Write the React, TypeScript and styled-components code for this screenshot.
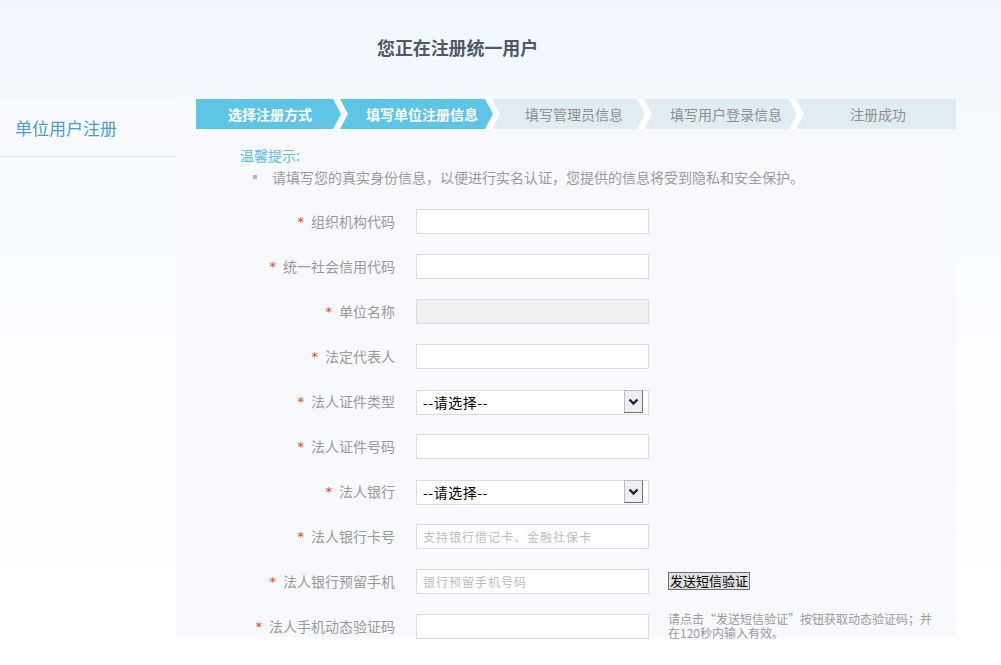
import React from "react";
import styled, { createGlobalStyle } from "styled-components";

const GlobalStyle = createGlobalStyle`
  html, body { margin: 0; padding: 0; }
  body {
    font-family: "Noto Sans CJK SC", "Noto Sans", sans-serif;
    background: linear-gradient(180deg, #f1f6fd 0px, #f6fafe 140px, #fcfdff 420px, #ffffff 640px);
    min-height: 665px;
  }
  #root { min-height: 665px; }
`;

const Page = styled.div`
  width: 1001px;
  height: 665px;
  overflow: hidden;
`;

const Header = styled.header`
  height: 99px;
  display: flex;
  align-items: center;
  padding-left: 377px;
  box-sizing: border-box;
`;

const Title = styled.h1`
  margin: 0;
  margin-top: -5px;
  font-size: 18px;
  font-weight: 700;
  color: #4f5966;
  letter-spacing: -0.1px;
`;

const Body = styled.div`
  display: flex;
  align-items: flex-start;
`;

const Sidebar = styled.aside`
  width: 176px;
  flex: none;
`;

const SideItem = styled.div`
  height: 57px;
  display: flex;
  align-items: center;
  padding-left: 15px;
  font-size: 17px;
  color: #4c9bd6;
  border-bottom: 1px solid #e6e9ef;
  background: #f9fafe;
`;

const Panel = styled.main`
  width: 780px;
  height: 538px;
  background: #f8f9fd;
  padding-left: 20px;
  box-sizing: border-box;
`;

const Steps = styled.ol`
  display: flex;
  margin: 0;
  padding: 0;
  list-style: none;
  height: 30px;
`;

const Step = styled.li<{ $active: boolean }>`
  position: relative;
  width: 152px;
  height: 30px;
  display: flex;
  align-items: center;
  justify-content: center;
  padding-right: 4px;
  box-sizing: border-box;
  background: ${(p) => (p.$active ? "#5fc5e7" : "#e1ecf2")};
  color: ${(p) => (p.$active ? "#ffffff" : "#8f8f8f")};
  font-size: 14px;
  font-weight: ${(p) => (p.$active ? 700 : 400)};
`;

const StepLabel = styled.span`
  position: relative;
  z-index: 1;
`;

const Chevron = styled.svg`
  position: absolute;
  right: 0;
  top: 0;
  width: 15px;
  height: 30px;
  display: block;
`;

const Content = styled.div`
  padding-left: 44px;
`;

const Hint = styled.div`
  margin-top: 17px;
  font-size: 14px;
  line-height: 18px;
  color: #5cc0e0;
`;

const HintList = styled.ul`
  margin: 4px 0 0;
  padding: 0;
  list-style: none;
`;

const HintItem = styled.li`
  display: flex;
  align-items: center;
  font-size: 14px;
  line-height: 18px;
  color: #9a9a9a;
`;

const Bullet = styled.span`
  width: 4px;
  height: 4px;
  background: #b5b5b5;
  margin-left: 13px;
  margin-right: 15px;
`;

const Form = styled.form`
  margin-left: -64px;
  margin-top: 23px;
  display: flex;
  flex-direction: column;
  gap: 20px;
`;

const Row = styled.div`
  display: flex;
  align-items: center;
  height: 25px;
`;

const Label = styled.label`
  width: 219px;
  display: flex;
  justify-content: flex-end;
  align-items: center;
  font-size: 14px;
  line-height: 18px;
  color: #9a9a9a;
  white-space: nowrap;
  flex: none;
  position: relative;
  top: -1px;
`;

const Star = styled.span`
  color: #ff3a1e;
  font-size: 13px;
  line-height: 10px;
  height: 7px;
  margin-right: 7px;
  font-family: "DejaVu Sans", sans-serif;
  font-weight: 400;
`;

const Field = styled.input<{ $disabled?: boolean }>`
  margin-left: 21px;
  width: 233px;
  height: 25px;
  box-sizing: border-box;
  border: 1px solid #dcdcdc;
  background: ${(p) => (p.$disabled ? "#f0f0f0" : "#ffffff")};
  padding: 0 6px;
  font-family: "Noto Sans CJK SC", sans-serif;
  font-size: 12px;
  letter-spacing: 1px;
  color: #333;
  outline: none;
  flex: none;
  &::placeholder { color: #bdbdbd; }
`;

const SelectWrap = styled.div`
  position: relative;
  margin-left: 21px;
  width: 233px;
  height: 25px;
  flex: none;
`;

const Select = styled.select`
  appearance: none;
  -webkit-appearance: none;
  width: 100%;
  height: 25px;
  box-sizing: border-box;
  border: 1px solid #dcdcdc;
  background: #fff;
  padding: 0 6px;
  font-family: "Noto Sans CJK SC", sans-serif;
  font-size: 14px;
  letter-spacing: 0.5px;
  color: #000;
  outline: none;
  border-radius: 0;
`;

const ArrowBox = styled.span`
  position: absolute;
  top: 1px;
  right: 6px;
  width: 19px;
  height: 23px;
  box-sizing: border-box;
  background: #efefef;
  border-top: 1px solid #bcbcbc;
  border-left: 1px solid #bcbcbc;
  border-right: 1px solid #6f6f6f;
  border-bottom: 1px solid #6f6f6f;
  display: flex;
  align-items: center;
  justify-content: center;
  pointer-events: none;
`;

const SmsButton = styled.button`
  margin-left: 19px;
  height: 18px;
  padding: 0 1px;
  font-family: "Noto Sans CJK SC", sans-serif;
  font-size: 13px;
  line-height: 16px;
  color: #000;
  background: #e1e1e1;
  border: 1px solid #707070;
  border-radius: 0;
  margin-top: -1px;
`;

const Help = styled.p`
  margin: 0 0 0 19px;
  align-self: flex-start;
  width: 270px;
  font-size: 12px;
  line-height: 14px;
  color: #9a9a9a;
  margin-top: -2px;
`;

const steps = ["选择注册方式", "填写单位注册信息", "填写管理员信息", "填写用户登录信息", "注册成功"];
const ACTIVE = "#5fc5e7";
const IDLE = "#e1ecf2";

type FieldDef =
  | { label: string; kind: "input"; placeholder?: string; disabled?: boolean; extra?: "sms" | "help" }
  | { label: string; kind: "select" };

const fields: FieldDef[] = [
  { label: "组织机构代码", kind: "input" },
  { label: "统一社会信用代码", kind: "input" },
  { label: "单位名称", kind: "input", disabled: true },
  { label: "法定代表人", kind: "input" },
  { label: "法人证件类型", kind: "select" },
  { label: "法人证件号码", kind: "input" },
  { label: "法人银行", kind: "select" },
  { label: "法人银行卡号", kind: "input", placeholder: "支持银行借记卡、金融社保卡" },
  { label: "法人银行预留手机", kind: "input", placeholder: "银行预留手机号码", extra: "sms" },
  { label: "法人手机动态验证码", kind: "input", extra: "help" },
];

export default function App() {
  return (
    <Page>
      <GlobalStyle />
      <Header>
        <Title>您正在注册统一用户</Title>
      </Header>
      <Body>
        <Sidebar>
          <SideItem>单位用户注册</SideItem>
        </Sidebar>
        <Panel>
          <Steps>
            {steps.map((s, i) => {
              const active = i < 2;
              const last = i === steps.length - 1;
              const next = i + 1 < 2 ? ACTIVE : IDLE;
              const cur = active ? ACTIVE : IDLE;
              return (
                <Step key={s} $active={active}>
                  <StepLabel>{s}</StepLabel>
                  {!last && (
                    <Chevron viewBox="0 0 15 30">
                      <rect x="0" y="0" width="15" height="30" fill={next} />
                      <polygon points="0,0 7,0 15,15 7,30 0,30" fill="#ffffff" />
                      <polygon points="0,0 8,15 0,30" fill={cur} />
                    </Chevron>
                  )}
                </Step>
              );
            })}
          </Steps>
          <Content>
            <Hint>温馨提示:</Hint>
            <HintList>
              <HintItem>
                <Bullet />
                请填写您的真实身份信息，以便进行实名认证，您提供的信息将受到隐私和安全保护。
              </HintItem>
            </HintList>
            <Form onSubmit={(e) => e.preventDefault()}>
              {fields.map((f) => (
                <Row key={f.label}>
                  <Label>
                    <Star>*</Star>
                    {f.label}
                  </Label>
                  {f.kind === "select" ? (
                    <SelectWrap>
                      <Select defaultValue="">
                        <option value="">--请选择--</option>
                      </Select>
                      <ArrowBox>
                        <svg width="11" height="8" viewBox="0 0 11 8">
                          <polyline points="1.5,1.5 5.5,5.5 9.5,1.5" fill="none" stroke="#1a2340" strokeWidth="2.4" />
                        </svg>
                      </ArrowBox>
                    </SelectWrap>
                  ) : (
                    <Field
                      type="text"
                      placeholder={f.placeholder}
                      $disabled={f.disabled}
                      disabled={f.disabled}
                    />
                  )}
                  {f.kind === "input" && f.extra === "sms" && (
                    <SmsButton type="button">发送短信验证</SmsButton>
                  )}
                  {f.kind === "input" && f.extra === "help" && (
                    <Help>请点击“发送短信验证”按钮获取动态验证码；并在120秒内输入有效。</Help>
                  )}
                </Row>
              ))}
            </Form>
          </Content>
        </Panel>
      </Body>
    </Page>
  );
}
